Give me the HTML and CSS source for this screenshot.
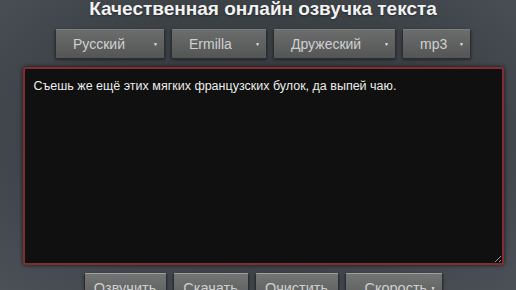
FILE: index.html
```html
<!DOCTYPE html>
<html lang="ru">
<head>
<meta charset="utf-8">
<title>Озвучка текста</title>
<link rel="stylesheet" href="styles.css">
</head>
<body>
<div class="page">
  <h1 class="title">Качественная онлайн озвучка текста</h1>
  <div class="selects">
    <div class="select select-lang"><span>Русский</span><span class="arrow">▼</span></div>
    <div class="select select-voice"><span>Ermilla</span><span class="arrow">▼</span></div>
    <div class="select select-mood"><span>Дружеский</span><span class="arrow">▼</span></div>
    <div class="select select-fmt"><span>mp3</span><span class="arrow">▼</span></div>
  </div>
  <textarea class="text">Съешь же ещё этих мягких французских булок, да выпей чаю.</textarea>
  <div class="buttons">
    <div class="btn btn-say">Озвучить</div>
    <div class="btn btn-dl">Скачать</div>
    <div class="btn btn-clear">Очистить</div>
    <div class="btn btn-speed"><span>Скорость</span><span class="arrow">▼</span></div>
  </div>
</div>
</body>
</html>
```
FILE: styles.css
```css
html, body {
  margin: 0;
  height: 100%;
}
body {
  background: radial-gradient(ellipse at 50% 45%, #35393d 0%, #3c4146 55%, #4b5157 100%);
  font-family: "Liberation Sans", Arial, sans-serif;
  overflow: hidden;
}
.page {
  padding-left: 10px;
  display: flex;
  flex-direction: column;
  align-items: center;
}
.title {
  margin: 0;
  font-size: 19px;
  line-height: 18px;
  font-weight: bold;
  color: #f2f2f2;
  text-shadow: 0 1px 2px rgba(0,0,0,.4);
}
.selects {
  margin-top: 11px;
  display: flex;
  gap: 6px;
}
.select, .btn {
  box-sizing: border-box;
  height: 30px;
  display: flex;
  align-items: center;
  justify-content: space-between;
  padding: 0 6px 0 17px;
  font-size: 14px;
  color: #cfd0d0;
  background: linear-gradient(#6b6d6d, #545656);
  border: 1px solid #2b2d2f;
  border-top-color: #7c7e7e;
  border-radius: 2px;
  box-shadow: 0 1px 3px rgba(0,0,0,.45);
}
.arrow {
  font-size: 5px;
  color: #e6e6e6;
}
.select-lang { width: 110px; }
.select-voice { width: 96px; }
.select-mood { width: 123px; }
.select-fmt { width: 69px; }
.text {
  margin-top: 8px;
  box-sizing: border-box;
  width: 481px;
  height: 198px;
  padding: 9px 9px;
  background: #0f100f;
  border: 2px solid #842c33;
  border-radius: 3px;
  box-shadow: 0 0 4px rgba(0,0,0,.7);
  color: #ececec;
  font-family: "Liberation Sans", Arial, sans-serif;
  font-size: 12.5px;
  line-height: 16px;
  outline: none;
  resize: both;
}
.buttons {
  margin-top: 8px;
  display: flex;
  gap: 6px;
}
.btn {
  justify-content: center;
  padding: 0;
  font-size: 14.5px;
  border-top-color: #a0a2a2;
  background: linear-gradient(#727474, #5a5c5c);
}
.btn-say { width: 83px; }
.btn-dl { width: 76px; }
.btn-clear { width: 84px; }
.btn-speed { width: 98px; justify-content: space-between; padding: 0 6px 0 19px; }
```
